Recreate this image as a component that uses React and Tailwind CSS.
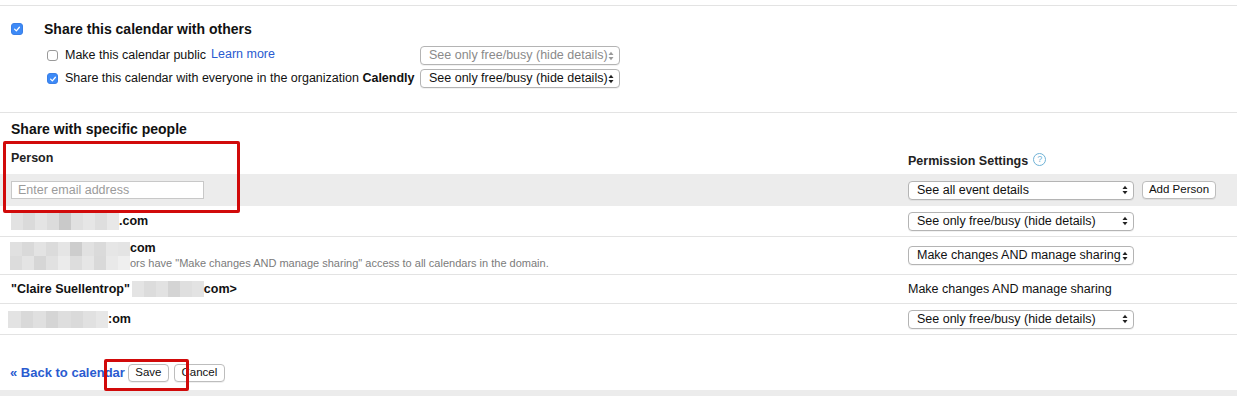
import React from 'react';

const Check = ({ checked, size = 'w-[12px] h-[12px]' }) => (
    <span
        className={`${size} inline-flex items-center justify-center rounded-[3px] ${
            checked ? 'bg-[#3d8af7] border border-[#3a7fe6]' : 'bg-white border border-[#9a9a9a]'
        }`}
    >
        {checked && (
            <svg viewBox="0 0 10 10" className="w-[8px] h-[8px]">
                <path d="M2 5.2 L4.2 7.3 L8 2.8" fill="none" stroke="#fff" strokeWidth="1.6" strokeLinecap="round" strokeLinejoin="round" />
            </svg>
        )}
    </span>
);

const Arrows = ({ dim }) => (
    <svg viewBox="0 0 6 10" className="w-[6px] h-[10px]">
        <path d="M0.5 4 L3 0.8 L5.5 4 Z" fill={dim ? '#999' : '#222'} />
        <path d="M0.5 6 L3 9.2 L5.5 6 Z" fill={dim ? '#999' : '#222'} />
    </svg>
);

const Select = ({ label, width, dim }) => (
    <div
        className={`${width} h-[19px] flex items-center justify-between pl-[8px] pr-[5px] rounded-[4px] border border-[#b4b4b4] bg-white shadow-[0_1px_0_rgba(0,0,0,0.05)] text-[12.5px] ${
            dim ? 'text-[#8a8a8a]' : 'text-[#111]'
        }`}
    >
        <span className="whitespace-nowrap">{label}</span>
        <Arrows dim={dim} />
    </div>
);

const Blur = ({ shades, h = 'h-[17px]', w = 'w-[12px]' }) => (
    <span className="inline-flex">
        {shades.map((s, i) => (
            <span key={i} className={`${w} ${h} ${s}`} />
        ))}
    </span>
);

const Btn = ({ children, w }) => (
    <div className={`${w} h-[18px] flex items-center justify-center rounded-[4px] border border-[#bdbdbd] bg-white text-[11.5px] text-[#111] shadow-[0_1px_0_rgba(0,0,0,0.06)]`}>
        {children}
    </div>
);

export default function App() {
    return (
        <div className="relative w-[1237px] h-[401px] overflow-hidden bg-white text-[12px] text-[#111]" style={{ fontFamily: '"Liberation Sans", Arial, sans-serif' }}>
            {/* linha topo */}
            <div className="h-[6px] border-b border-[#e3e3e3]" />

            {/* compartilhar com outros */}
            <div className="pt-[17px] h-[107px] border-b border-[#e3e3e3]">
                <div className="flex items-center h-[12px]">
                    <span className="ml-[11px] flex"><Check checked /></span>
                    <span className="ml-[21px] text-[14px] font-bold leading-none">Share this calendar with others</span>
                </div>
                <div className="flex items-center mt-[11px] h-[19px]">
                    <span className="ml-[47px] flex"><Check size="w-[11px] h-[11px]" /></span>
                    <div className="ml-[7px] w-[355px] flex items-center gap-[5px] text-[12.5px]">
                        <span>Make this calendar public</span>
                        <span className="text-[#2a5bd0] -mt-[2px]">Learn more</span>
                    </div>
                    <Select label="See only free/busy (hide details)" width="w-[200px]" dim />
                </div>
                <div className="flex items-center mt-[4px] h-[19px]">
                    <span className="ml-[47px] flex"><Check checked size="w-[11px] h-[11px]" /></span>
                    <div className="ml-[7px] w-[355px] text-[12.5px] whitespace-nowrap">
                        Share this calendar with everyone in the organization <b>Calendly</b>
                    </div>
                    <Select label="See only free/busy (hide details)" width="w-[200px]" />
                </div>
            </div>

            {/* pessoas especificas */}
            <div className="pl-[11px] pt-[9px] text-[14px] font-bold leading-none">Share with specific people</div>
            <div className="flex items-end h-[38px] pb-[3px]">
                <div className="w-[908px] pl-[11px] font-bold text-[12.5px] text-[#222] mb-[3px]">Person</div>
                <div className="flex items-center gap-[5px] font-bold text-[12.5px] text-[#222]">
                    Permission Settings
                    <span className="w-[13px] h-[13px] rounded-full border border-[#6fb2d6] text-[#6fb2d6] text-[9px] font-normal flex items-center justify-center -mt-[4px]">?</span>
                </div>
            </div>

            <div className="h-[32px] bg-[#ececec] flex items-center">
                <div className="w-[908px] pl-[11px]">
                    <div className="w-[193px] h-[18px] bg-white border border-[#c8c8c8] pl-[6px] text-[12.5px] text-[#9b9b9b] flex items-center">Enter email address</div>
                </div>
                <Select label="See all event details" width="w-[226px]" />
                <div className="ml-[8px]"><Btn w="w-[74px]">Add Person</Btn></div>
            </div>

            <div className="h-[31px] flex items-center border-b border-[#e3e3e3]">
                <div className="w-[908px] pl-[11px] flex items-center">
                    <Blur shades={['bg-[#e2e2e2]', 'bg-[#dadada]', 'bg-[#e4e4e4]', 'bg-[#dcdcdc]', 'bg-[#c9c9c9]', 'bg-[#e0e0e0]', 'bg-[#e6e6e6]', 'bg-[#dedede]', 'bg-[#e8e8e8]']} />
                    <span className="font-bold text-[12.5px]">.com</span>
                </div>
                <Select label="See only free/busy (hide details)" width="w-[226px]" />
            </div>

            <div className="h-[38px] flex items-center border-b border-[#e3e3e3]">
                <div className="w-[908px] pl-[10px] flex items-center">
                    <span className="flex flex-col">
                        <Blur h="h-[14px]" shades={['bg-[#e0e0e0]', 'bg-[#d9d9d9]', 'bg-[#e3e3e3]', 'bg-[#dbdbdb]', 'bg-[#e5e5e5]', 'bg-[#cdcdcd]', 'bg-[#e1e1e1]', 'bg-[#dadada]', 'bg-[#e6e6e6]', 'bg-[#e4e4e4]']} />
                        <Blur h="h-[14px]" shades={['bg-[#dcdcdc]', 'bg-[#e4e4e4]', 'bg-[#d6d6d6]', 'bg-[#e1e1e1]', 'bg-[#ebebeb]', 'bg-[#dddddd]', 'bg-[#e6e6e6]', 'bg-[#d9d9d9]', 'bg-[#e9e9e9]', 'bg-[#efefef]']} />
                    </span>
                    <span className="flex flex-col leading-none">
                        <span className="font-bold text-[12.5px]">com</span>
                        <span className="text-[11px] text-[#7b7b7b] mt-[3px] whitespace-nowrap">ors have "Make changes AND manage sharing" access to all calendars in the domain.</span>
                    </span>
                </div>
                <Select label="Make changes AND manage sharing" width="w-[226px]" />
            </div>

            <div className="h-[29px] flex items-center border-b border-[#e3e3e3]">
                <div className="w-[908px] pl-[11px] flex items-center">
                    <span className="font-bold text-[12.5px] mr-[2px]">"Claire Suellentrop"</span>
                    <Blur h="h-[16px]" shades={['bg-[#e4e4e4]', 'bg-[#dcdcdc]', 'bg-[#e2e2e2]', 'bg-[#d4d4d4]', 'bg-[#dfdfdf]', 'bg-[#e3e3e3]']} />
                    <span className="font-bold text-[12.5px]">com&gt;</span>
                </div>
                <span className="text-[12.5px]">Make changes AND manage sharing</span>
            </div>

            <div className="h-[31px] flex items-center border-b border-[#e3e3e3]">
                <div className="w-[908px] pl-[8px] flex items-center">
                    <Blur shades={['bg-[#e3e3e3]', 'bg-[#d9d9d9]', 'bg-[#e0e0e0]', 'bg-[#d5d5d5]', 'bg-[#dedede]', 'bg-[#dadada]', 'bg-[#e1e1e1]', 'bg-[#e7e7e7]']} w="w-[12.5px]" />
                    <span className="font-bold text-[12.5px]">:om</span>
                </div>
                <Select label="See only free/busy (hide details)" width="w-[226px]" />
            </div>

            {/* rodape */}
            <div className="flex items-center h-[55px] pl-[10px] pt-[21px]">
                <span className="text-[#2a5bd0] font-bold text-[13px] mr-[3px]">« Back to calendar</span>
                <Btn w="w-[41px]">Save</Btn>
                <div className="ml-[5px]"><Btn w="w-[51px]">Cancel</Btn></div>
            </div>
            <div className="h-[6px] bg-[#ececec]" />

            {/* marcações vermelhas */}
            <div className="absolute left-[3px] top-[141px] w-[237px] h-[72px] border-[3px] border-[#d10a0a] rounded-[2px]" />
            <div className="absolute left-[104px] top-[359px] w-[85px] h-[32px] border-[3px] border-[#d10a0a] rounded-[2px]" />
        </div>
    );
}
